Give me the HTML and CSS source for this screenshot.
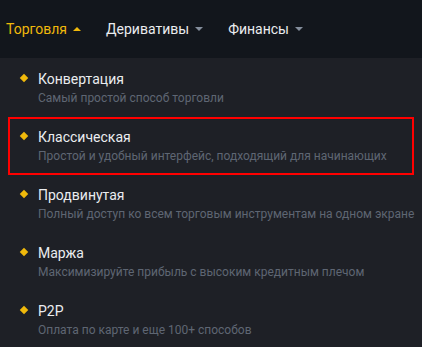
FILE: index.html
```html
<!DOCTYPE html>
<html lang="ru">
<head>
  <meta charset="UTF-8">
  <title>Торговля</title>
  <link rel="stylesheet" href="styles.css">
</head>
<body>
  <header class="topbar">
    <nav class="nav">
      <a class="nav-item active" href="#">Торговля <span class="caret up"></span></a>
      <a class="nav-item" href="#">Деривативы <span class="caret"></span></a>
      <a class="nav-item" href="#">Финансы <span class="caret"></span></a>
    </nav>
  </header>

  <ul class="menu">
    <li class="menu-item">
      <span class="dot"></span>
      <div class="menu-text">
        <div class="menu-title">Конвертация</div>
        <div class="menu-desc">Самый простой способ торговли</div>
      </div>
    </li>
    <li class="menu-item selected">
      <span class="dot"></span>
      <div class="menu-text">
        <div class="menu-title">Классическая</div>
        <div class="menu-desc">Простой и удобный интерфейс, подходящий для начинающих</div>
      </div>
    </li>
    <li class="menu-item">
      <span class="dot"></span>
      <div class="menu-text">
        <div class="menu-title">Продвинутая</div>
        <div class="menu-desc">Полный доступ ко всем торговым инструментам на одном экране</div>
      </div>
    </li>
    <li class="menu-item">
      <span class="dot"></span>
      <div class="menu-text">
        <div class="menu-title">Маржа</div>
        <div class="menu-desc">Максимизируйте прибыль с высоким кредитным плечом</div>
      </div>
    </li>
    <li class="menu-item">
      <span class="dot"></span>
      <div class="menu-text">
        <div class="menu-title">P2P</div>
        <div class="menu-desc">Оплата по карте и еще 100+ способов</div>
      </div>
    </li>
  </ul>
</body>
</html>
```

FILE: styles.css
```css
/* Global */
body {
  margin: 0;
  background: #1e2026;
  font-family: Roboto, 'Liberation Sans', sans-serif;
  color: #eaecef;
}

/* Top bar */
.topbar {
  background: #12161c;
  height: 58px;
  display: flex;
  align-items: center;
}

.nav {
  display: flex;
  padding-left: 6px;
  gap: 25px;
}

.nav-item {
  color: #eaecef;
  text-decoration: none;
  font-size: 14px;
  display: flex;
  align-items: center;
  gap: 6px;
}

.nav-item.active {
  color: #f0b90b;
}

.caret {
  width: 0;
  height: 0;
  border-left: 4px solid transparent;
  border-right: 4px solid transparent;
  border-top: 4px solid #848e9c;
}

.caret.up {
  border-top: none;
  border-bottom: 4px solid #f0b90b;
}

/* Dropdown list */
.menu {
  list-style: none;
  margin: 0;
  padding: 1px 8px 0;
}

.menu-item {
  display: flex;
  align-items: flex-start;
  box-sizing: border-box;
  height: 58px;
  padding: 8px 8px 0 11px;
  border: 2px solid transparent;
}

.menu-item.selected {
  border-color: #ff0000;
}

.dot {
  width: 6px;
  height: 6px;
  background: #f0b90b;
  transform: rotate(45deg);
  margin: 6px 11px 0 0;
  flex-shrink: 0;
}

.menu-title {
  font-size: 14px;
  line-height: 20px;
  color: #eaecef;
}

.menu-desc {
  font-size: 12px;
  line-height: 18px;
  color: #5e6673;
  white-space: nowrap;
}
```
